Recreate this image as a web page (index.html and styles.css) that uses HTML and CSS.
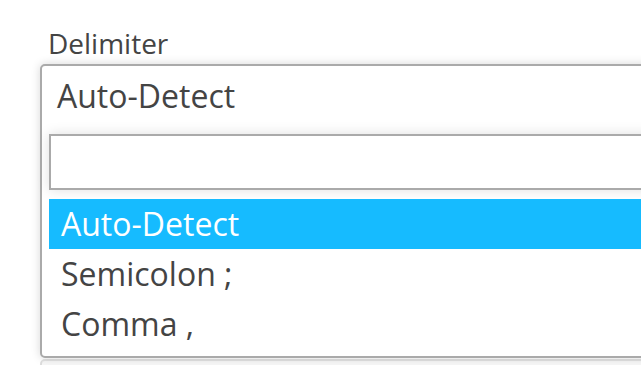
FILE: index.html
```html
<!DOCTYPE html>
<html>
<head>
<meta charset="utf-8">
<link rel="stylesheet" href="styles.css">
</head>
<body>
<div class="page">
  <label class="label">Delimiter</label>
  <div class="select">
    <div class="selection">Auto-Detect</div>
    <div class="search"><input class="search-input" type="text"></div>
    <ul class="results">
      <li class="option highlighted">Auto-Detect</li>
      <li class="option">Semicolon ;</li>
      <li class="option">Comma ,</li>
    </ul>
  </div>
  <div class="under"></div>
</div>
</body>
</html>
```
FILE: styles.css
```css
html, body {
  margin: 0;
  padding: 0;
  background: #fff;
  overflow: hidden;
}
.page {
  width: 641px;
  height: 365px;
  overflow: hidden;
  padding-left: 40px;
  padding-top: 26px;
  box-sizing: border-box;
  font-family: "Open Sans", "Liberation Sans", sans-serif;
  color: #444;
}
.label {
  display: block;
  font-size: 28px;
  line-height: 34px;
  height: 38px;
  padding-left: 8px;
  color: #444;
}
.select {
  width: 720px;
  border: 2px solid #aaa;
  border-radius: 5px;
  background: #fff;
  box-shadow: 0 0 10px rgba(0, 0, 0, 0.16);
  padding-bottom: 7px;
  position: relative;
  z-index: 2;
}
.selection {
  font-size: 32px;
  line-height: 50px;
  height: 50px;
  padding: 5px 0 0 15px;
}
.search {
  padding: 13px 0 0 7px;
}
.search-input {
  display: block;
  width: 700px;
  height: 56px;
  box-sizing: border-box;
  border: 2px solid #aaa;
  margin: 0;
  padding: 0;
  outline: none;
  background: #fff;
  box-shadow: 0 0 12px rgba(0, 0, 0, 0.13);
}
.results {
  list-style: none;
  margin: 9px 0 0 7px;
  padding: 0;
}
.option {
  font-size: 32px;
  line-height: 50px;
  height: 50px;
  padding-left: 12px;
  color: #444;
}
.option.highlighted {
  background: #16bbff;
  color: #fff;
}
.under {
  margin-top: 1px;
  height: 20px;
  width: 720px;
  border-left: 2px solid #ddd;
  border-top: 2px solid #e2e2e2;
  border-radius: 5px 0 0 0;
  background: #f7f7f7;
}
```
